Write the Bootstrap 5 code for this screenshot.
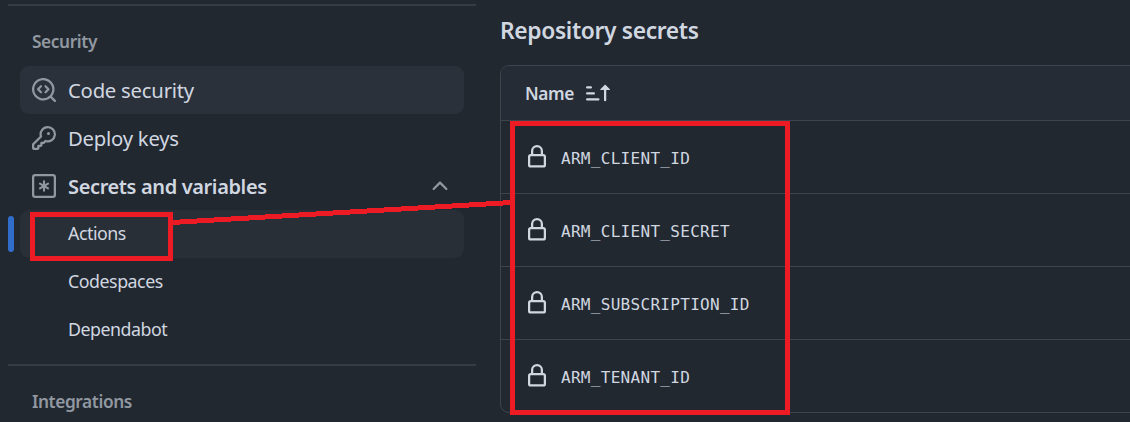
<!DOCTYPE html>
<html lang="en" data-bs-theme="dark">
<head>
<meta charset="utf-8">
<meta name="viewport" content="width=device-width, initial-scale=1">
<title>Repository secrets</title>
<link href="https://cdn.jsdelivr.net/npm/bootstrap@5.3.0/dist/css/bootstrap.min.css" rel="stylesheet">
<style>
body{background:#212830;color:#d1d7e0;font-family:"Noto Sans","Open Sans",sans-serif;height:422px;overflow:hidden}
svg{display:block;flex:none;fill:currentColor}
.icon{width:24px;height:24px}
.side{width:476px;padding:4px 0 0 8px;flex:none}
.rule{height:2px;background:#353c44}
.side-title{height:60px;padding:12px 0 0 24px;line-height:48px;font-size:17.3px;font-weight:600;letter-spacing:-.4px;color:#9198a1}
.side .nav-link{height:48px;margin:0 12px;padding:0 12px;border-radius:9px;color:#d1d7e0;font-size:20.3px;letter-spacing:-.23px}
.side .nav-link .icon{color:#9198a1;margin-right:12px}
.side .nav-link.sub-item{padding:0 12px 2px 48px;font-size:17.8px;letter-spacing:-.47px}
.side .nav-link.hovered{background:#2b313b}
.side .nav-link.current{background:#282f37}
.current::before{content:"";position:absolute;left:-12px;top:6px;width:6px;height:36px;border-radius:4px;background:#316dca}
.side .nav-link.semi{font-weight:600;font-size:20px;letter-spacing:-.37px}
.semi span,.secrets-head span{padding-top:2px}
main{margin-left:24px;width:660px;flex:none}
h1{color:#d1d7e0;font-size:22.8px;font-weight:600;letter-spacing:-.35px;line-height:36px;margin:13px 0 16px}
.secrets{border:1px solid #3d444d;border-radius:9px;overflow:hidden}
.secrets-head{height:54px;padding-left:24px;gap:12px;background:#262c36;font-size:17.3px;font-weight:600;letter-spacing:-.4px}
.secret{height:73px;padding-left:24px;gap:12px;border-top:1px solid #3d444d;font-family:"DejaVu Sans Mono",monospace;font-size:16px;letter-spacing:.3px}
.secret span{padding-top:4px}
.notes{position:absolute;left:0;top:0;fill:none;stroke:#ed1c24;stroke-width:5;pointer-events:none}
</style>
</head>
<body>
<svg width="0" height="0" class="position-absolute">
<symbol id="lock" viewBox="0 0 16 16"><path d="M4 4a4 4 0 0 1 8 0v2h.25c.966 0 1.75.784 1.75 1.75v5.5A1.75 1.75 0 0 1 12.25 15h-8.5A1.75 1.75 0 0 1 2 13.25v-5.5C2 6.784 2.784 6 3.75 6H4Zm8.25 3.5h-8.5a.25.25 0 0 0-.25.25v5.5c0 .138.112.25.25.25h8.5a.25.25 0 0 0 .25-.25v-5.5a.25.25 0 0 0-.25-.25ZM10.5 6V4a2.5 2.5 0 1 0-5 0v2Z"/></symbol>
</svg>
<div class="d-flex">
<aside class="side">
<div class="rule"></div>
<div class="side-title"><span>Security</span></div>
<nav class="nav flex-column flex-nowrap mb-2 pb-1">
<a class="nav-link d-flex align-items-center hovered"><svg class="icon" viewBox="0 0 16 16"><path d="M8.47 4.97a.75.75 0 0 0 0 1.06L9.94 7.5 8.47 8.97a.75.75 0 1 0 1.06 1.06l2-2a.75.75 0 0 0 0-1.06l-2-2a.75.75 0 0 0-1.06 0ZM6.53 6.03a.75.75 0 0 0-1.06-1.06l-2 2a.75.75 0 0 0 0 1.06l2 2a.75.75 0 1 0 1.06-1.06L5.06 7.5l1.47-1.47Z"/><path d="M12.246 13.307a7.501 7.501 0 1 1 1.06-1.06l2.474 2.473a.749.749 0 1 1-1.06 1.06l-2.474-2.473ZM1.5 7.5a6.002 6.002 0 0 0 3.608 5.504 6.002 6.002 0 0 0 6.486-1.117.748.748 0 0 1 .292-.293A6 6 0 1 0 1.5 7.5Z"/></svg><span>Code security</span></a>
<a class="nav-link d-flex align-items-center"><svg class="icon" viewBox="0 0 16 16"><path d="M10.5 0a5.499 5.499 0 1 1-1.288 10.848l-.932.932a.749.749 0 0 1-.53.22H7v.75a.749.749 0 0 1-.22.53l-.5.5a.749.749 0 0 1-.53.22H5v.75a.749.749 0 0 1-.22.53l-.5.5a.749.749 0 0 1-.53.22h-2A1.75 1.75 0 0 1 0 14.25v-2c0-.199.079-.389.22-.53l4.932-4.932A5.5 5.5 0 0 1 10.5 0Zm-4 5.5c-.001.431.069.86.205 1.269a.75.75 0 0 1-.181.768L1.5 12.56v1.69c0 .138.112.25.25.25h1.69l.06-.06v-1.19a.75.75 0 0 1 .75-.75h1.19l.06-.06v-1.19a.75.75 0 0 1 .75-.75h1.19l1.023-1.025a.75.75 0 0 1 .768-.18A4 4 0 1 0 6.5 5.5ZM11 6a1 1 0 1 1 0-2 1 1 0 0 1 0 2Z"/></svg><span>Deploy keys</span></a>
<a class="nav-link d-flex align-items-center semi"><svg class="icon" viewBox="0 0 16 16"><g fill="none" stroke="currentColor"><rect x=".75" y=".75" width="14.5" height="14.5" rx="1.4" stroke-width="1.5"/><path d="M8 4.9v6.2M5.3 6.45l5.4 3.1M10.7 6.45l-5.4 3.1" stroke-width="1.4" stroke-linecap="round"/></g></svg><span>Secrets and variables</span><svg class="icon ms-auto me-0" viewBox="0 0 16 16"><path d="M3.22 10.53a.749.749 0 0 1 0-1.06l4.25-4.25a.749.749 0 0 1 1.06 0l4.25 4.25a.749.749 0 1 1-1.06 1.06L8 6.811 4.28 10.53a.749.749 0 0 1-1.06 0Z"/></svg></a>
<a class="nav-link d-flex align-items-center sub-item current position-relative"><span>Actions</span></a>
<a class="nav-link d-flex align-items-center sub-item"><span>Codespaces</span></a>
<a class="nav-link d-flex align-items-center sub-item"><span>Dependabot</span></a>
</nav>
<div class="rule" style="margin-top:-2px"></div>
<div class="side-title"><span>Integrations</span></div>
</aside>
<main>
<h1><span>Repository secrets</span></h1>
<div class="secrets">
<div class="secrets-head d-flex align-items-center"><span>Name</span><svg class="icon" viewBox="0 0 16 16"><path d="m12.927 2.573 3 3A.25.25 0 0 1 15.75 6H13.5v6.75a.75.75 0 0 1-1.5 0V6H9.75a.25.25 0 0 1-.177-.427l3-3a.25.25 0 0 1 .354 0ZM0 12.25a.75.75 0 0 1 .75-.75h7.5a.75.75 0 0 1 0 1.5H.75a.75.75 0 0 1-.75-.75Zm0-4a.75.75 0 0 1 .75-.75h4.5a.75.75 0 0 1 0 1.5H.75A.75.75 0 0 1 0 8.25Zm0-4a.75.75 0 0 1 .75-.75h2.5a.75.75 0 0 1 0 1.5H.75A.75.75 0 0 1 0 4.25Z"/></svg></div>
<div class="secret d-flex align-items-center"><svg class="icon"><use href="#lock"/></svg><span>ARM_CLIENT_ID</span></div>
<div class="secret d-flex align-items-center"><svg class="icon"><use href="#lock"/></svg><span>ARM_CLIENT_SECRET</span></div>
<div class="secret d-flex align-items-center"><svg class="icon"><use href="#lock"/></svg><span>ARM_SUBSCRIPTION_ID</span></div>
<div class="secret d-flex align-items-center"><svg class="icon"><use href="#lock"/></svg><span>ARM_TENANT_ID</span></div>
</div>
</main>
</div>
<svg class="notes" width="1130" height="422" shape-rendering="crispEdges"><rect x="32.5" y="214.5" width="138" height="44"/><rect x="512.5" y="123.500" width="275" height="289"/><path d="M172 222.500L512 202.500"/></svg>
<script src="https://cdn.jsdelivr.net/npm/bootstrap@5.3.0/dist/js/bootstrap.bundle.min.js"></script>
</body>
</html>
